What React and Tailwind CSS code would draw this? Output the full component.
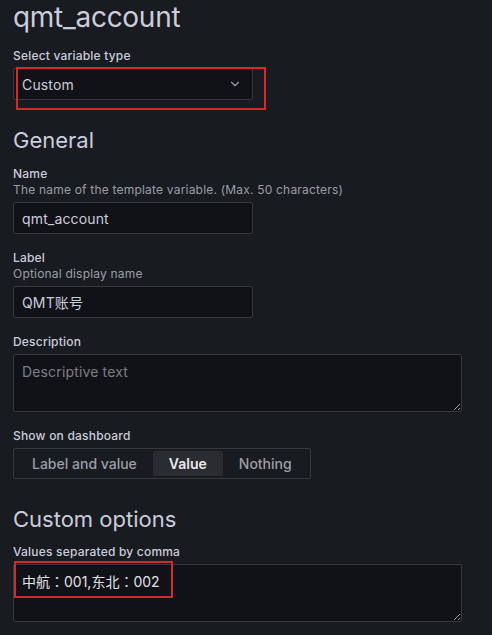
import React from 'react';
import { ChevronDown } from 'lucide-react';

const Label = ({ children, desc }) => (
  <div className="mb-1 tracking-[0.0125em]">
    <div className="text-[12px] leading-4 font-medium text-[#ccccdc]">{children}</div>
    {desc && <div className="text-[12px] leading-4 text-[#9d9ea6]">{desc}</div>}
  </div>
);

const Input = ({ value }) => (
  <div className="w-[240px] h-8 flex items-center px-2 bg-[#111217] border border-[#37383e] rounded-[2px] text-[14px] tracking-[0.01071em] text-[#ccccdc]">
    {value}
  </div>
);

function App() {
  return (
    <div className="relative min-h-screen bg-[#181b1f] pl-[13px] font-['Inter','Noto_Sans_CJK_JP',sans-serif] text-[#ccccdc]">
      <h1 className="text-[28px] leading-[34px] font-normal tracking-[-0.01em]">qmt_account</h1>

      {/* Variable type */}
      <div className="mt-[14px]">
        <Label>Select variable type</Label>
        <div className="w-[240px] h-8 flex items-center justify-between pl-2 pr-[10px] bg-[#111217] border border-[#37383e] rounded-[2px] text-[14px] tracking-[0.01071em]">
          <span>Custom</span>
          <ChevronDown size={14} strokeWidth={2} className="text-[#9a9ba3]" />
        </div>
      </div>

      <h2 className="mt-[27px] text-[22px] leading-[27px] font-normal">General</h2>

      <div className="mt-3">
        <Label desc="The name of the template variable. (Max. 50 characters)">Name</Label>
        <Input value="qmt_account" />
      </div>

      <div className="mt-4">
        <Label desc="Optional display name">Label</Label>
        <Input value="QMT账号" />
      </div>

      <div className="mt-4">
        <Label>Description</Label>
        <textarea
          readOnly
          placeholder="Descriptive text"
          className="block w-[449px] h-[58px] px-2 pt-[6px] leading-[21px] bg-[#111217] border border-[#37383e] rounded-[2px] text-[14px] tracking-[0.01071em] text-[#ccccdc] placeholder:text-[#7c7e86] outline-none [color-scheme:dark]"
        />
      </div>

      <div className="mt-4">
        <Label>Show on dashboard</Label>
        <div className="inline-flex p-[2px] border border-[#37383e] rounded-[2px] text-[14px]">
          <div className="h-[25px] px-4 flex items-center font-medium text-[#9d9ea6]">Label and value</div>
          <div className="h-[25px] px-4 flex items-center font-semibold text-[#e8e8ee] bg-[#2a2c31] rounded-[2px]">Value</div>
          <div className="h-[25px] px-4 flex items-center font-medium text-[#9d9ea6]">Nothing</div>
        </div>
      </div>

      <h2 className="mt-[27px] text-[22px] leading-[27px] font-normal">Custom options</h2>

      <div className="mt-[11px]">
        <Label>Values separated by comma</Label>
        <textarea
          readOnly
          defaultValue="中航：001,东北：002"
          className="block w-[449px] h-[58px] px-2 pt-[6px] leading-[21px] bg-[#111217] border border-[#37383e] rounded-[2px] text-[14px] text-[#e0e0e6] outline-none resize-y [color-scheme:dark]"
        />
      </div>

      {/* annotation boxes */}
      <div className="absolute left-4 top-[67px] w-[250px] h-[43px] border-2 border-[#d42a2a] pointer-events-none" />
      <div className="absolute left-[14px] top-[561px] w-[159px] h-[37px] border-2 border-[#d42a2a] pointer-events-none" />
    </div>
  );
}

export default App;
